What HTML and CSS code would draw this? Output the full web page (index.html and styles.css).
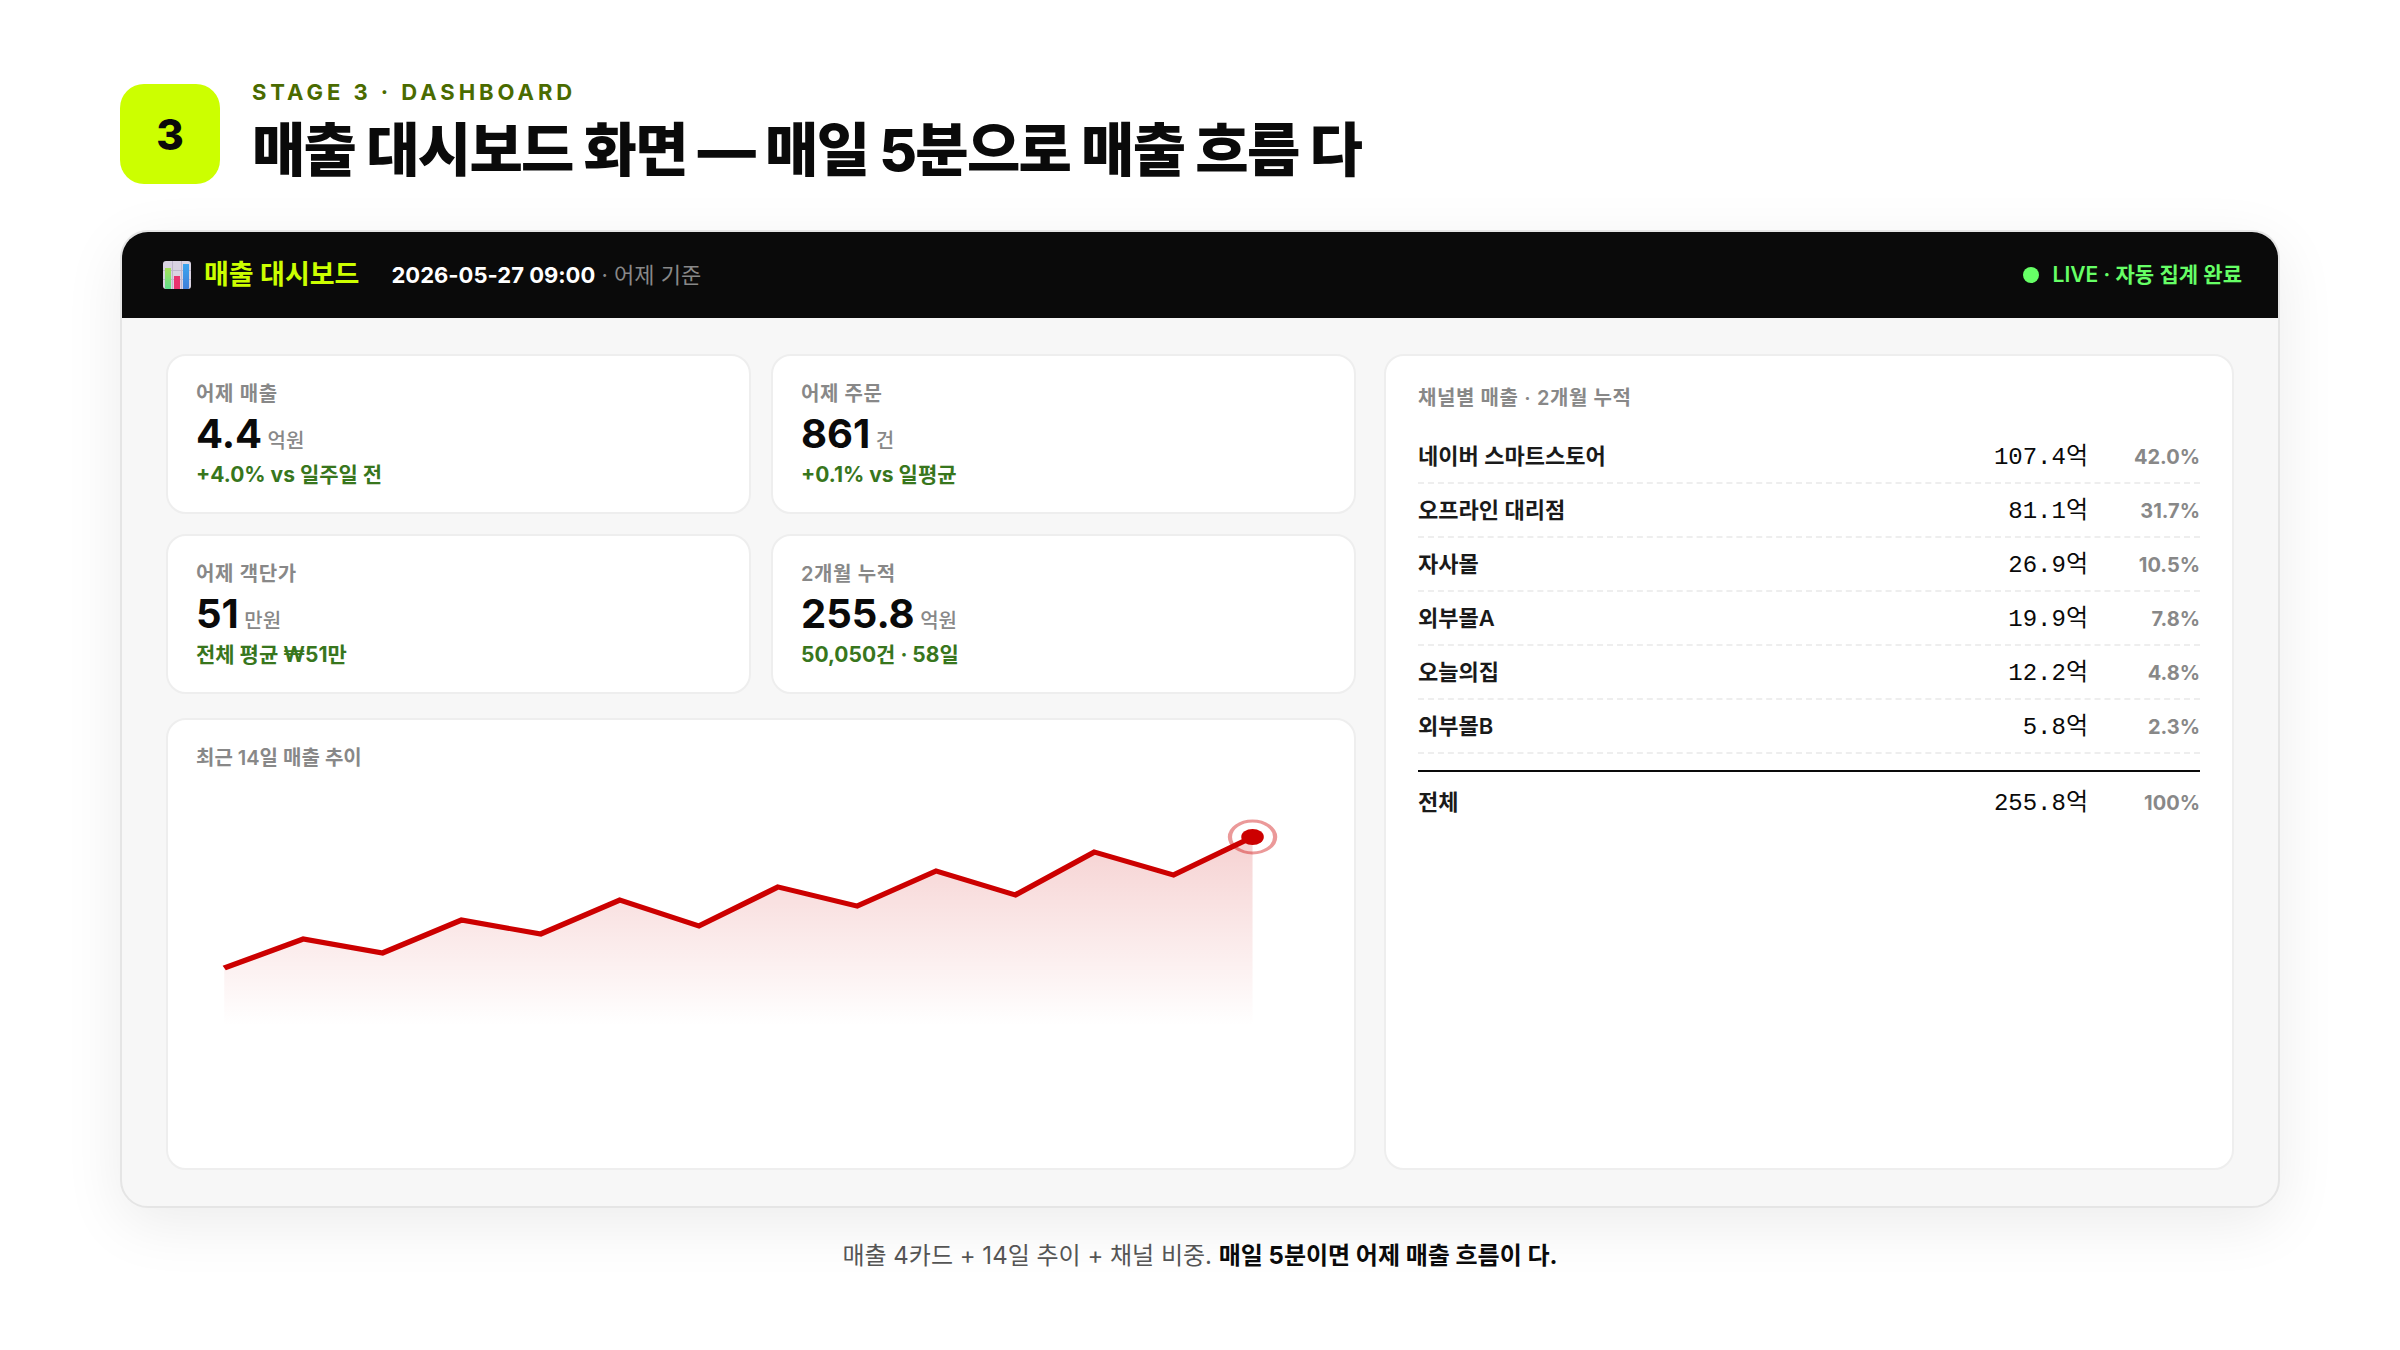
FILE: index.html
```html
<!DOCTYPE html>
<html lang="ko">
<head>
  <meta charset="UTF-8">
  <title>매출 대시보드</title>
  <link rel="stylesheet" href="styles.css">
</head>
<body>
<header class="head">
  <div class="badge">3</div>
  <div class="head-text">
    <div class="stage">STAGE 3 · DASHBOARD</div>
    <h1 class="title">매출 대시보드 화면 — 매일 5분으로 매출 흐름 다</h1>
  </div>
</header>

<main class="frame">
  <div class="topbar">
    <svg class="logo" viewBox="0 0 28 28" aria-hidden="true">
      <defs>
        <linearGradient id="green" x1="0" y1="0" x2="0" y2="1">
          <stop offset="0" stop-color="#a6e05a"/>
          <stop offset="1" stop-color="#5fe08c"/>
        </linearGradient>
        <linearGradient id="blue" x1="0" y1="0" x2="0" y2="1">
          <stop offset="0" stop-color="#3aa5f0"/>
          <stop offset="1" stop-color="#3f7fd8"/>
        </linearGradient>
      </defs>
      <rect width="28" height="28" rx="3" fill="#d9d3e2"/>
      <path d="M0 9.500h28M0 18.500h28M9.500 0v28M18.500 0v28" stroke="#bfb6cc" fill="none"/>
      <path d="M2 7h6v21H3q-1 0-1-1z" fill="url(#green)"/>
      <path d="M11 15h6v13h-6z" fill="#e8336f"/>
      <path d="M20 3h6v24q0 1-1 1h-5z" fill="url(#blue)"/>
    </svg>
    <strong class="brand">매출 대시보드</strong>
    <span class="date"><b>2026-05-27 09:00</b> · 어제 기준</span>
    <span class="live">LIVE · 자동 집계 완료</span>
  </div>

  <div class="body">
    <div class="left">
      <div class="kpis">
        <section class="card kpi">
          <div class="label">어제 매출</div>
          <div class="value">4.4 <small>억원</small></div>
          <div class="delta">+4.0% vs 일주일 전</div>
        </section>
        <section class="card kpi">
          <div class="label">어제 주문</div>
          <div class="value">861 <small>건</small></div>
          <div class="delta">+0.1% vs 일평균</div>
        </section>
        <section class="card kpi">
          <div class="label">어제 객단가</div>
          <div class="value">51 <small>만원</small></div>
          <div class="delta">전체 평균 ₩51만</div>
        </section>
        <section class="card kpi">
          <div class="label">2개월 누적</div>
          <div class="value">255.8 <small>억원</small></div>
          <div class="delta">50,050건 · 58일</div>
        </section>
      </div>
      <section class="card chart">
        <h2 class="label">최근 14일 매출 추이</h2>
        <svg class="trend" viewBox="0 0 800 260" preserveAspectRatio="none">
          <defs>
            <linearGradient id="fade" x1="0" y1="0" x2="0" y2="1">
              <stop offset="0" stop-color="#c00" stop-opacity=".18"/>
              <stop offset="1" stop-color="#c00" stop-opacity="0"/>
            </linearGradient>
          </defs>
          <path fill="url(#fade)" d="M20 192L76 163L132 177L188 144L244 158L300 124L356 150L412 111L468 130L524 95L580 119L636 76L692 99L748 61V250H20Z"/>
          <polyline fill="none" stroke="#c00" stroke-width="5" points="20,192 76,163 132,177 188,144 244,158 300,124 356,150 412,111 468,130 524,95 580,119 636,76 692,99 748,61"/>
          <circle cx="748" cy="61" r="8" fill="#c00"/>
          <circle cx="748" cy="61" r="16" fill="none" stroke="#c00" stroke-width="3" opacity=".4"/>
        </svg>
      </section>
    </div>

    <section class="card channels">
      <h2 class="label">채널별 매출 · 2개월 누적</h2>
      <table>
        <tbody>
          <tr><th scope="row">네이버 스마트스토어</th><td class="amount">107.4억</td><td class="share">42.0%</td></tr>
          <tr><th scope="row">오프라인 대리점</th><td class="amount">81.1억</td><td class="share">31.7%</td></tr>
          <tr><th scope="row">자사몰</th><td class="amount">26.9억</td><td class="share">10.5%</td></tr>
          <tr><th scope="row">외부몰A</th><td class="amount">19.9억</td><td class="share">7.8%</td></tr>
          <tr><th scope="row">오늘의집</th><td class="amount">12.2억</td><td class="share">4.8%</td></tr>
          <tr><th scope="row">외부몰B</th><td class="amount">5.8억</td><td class="share">2.3%</td></tr>
        </tbody>
        <tfoot>
          <tr><th scope="row">전체</th><td class="amount">255.8억</td><td class="share">100%</td></tr>
        </tfoot>
      </table>
    </section>
  </div>
</main>

<p class="caption">매출 4카드 + 14일 추이 + 채널 비중. <b>매일 5분이면 어제 매출 흐름이 다.</b></p>
</body>
</html>
```

FILE: styles.css
```css
* {
  box-sizing: border-box;
}

body {
  display: flex;
  flex-direction: column;
  min-height: 100vh;
  margin: 0;
  padding: 78px 120px 76px;
  background: #fff;
  color: #0a0a0a;
  font-family: Inter, "Noto Sans CJK KR", sans-serif;
}

.head {
  display: flex;
  align-items: center;
  gap: 32px;
  height: 112px;
  margin-bottom: 40px;
}

.badge {
  display: flex;
  align-items: center;
  justify-content: center;
  width: 100px;
  height: 100px;
  border-radius: 24px;
  background: #cf0;
  font-size: 42px;
  font-weight: 800;
}

.head-text {
  padding-top: 4px;
}

.stage {
  color: #4a6b00;
  font-size: 22px;
  line-height: 28px;
  font-weight: 700;
  letter-spacing: .18em;
}

.title {
  margin: 0;
  font-size: 58px;
  line-height: 88px;
  font-weight: 800;
  letter-spacing: -.03em;
}

.frame {
  display: flex;
  flex: 1;
  flex-direction: column;
  overflow: hidden;
  border: 2px solid #e5e5e5;
  border-radius: 28px;
  background: #f7f7f7;
  box-shadow: 0 16px 60px rgba(0, 0, 0, .08);
}

.topbar {
  display: flex;
  align-items: center;
  height: 86px;
  padding: 0 36px 0 41px;
  background: #0a0a0a;
}

.logo {
  width: 28px;
  height: 28px;
  margin-right: 13px;
}

.brand {
  margin-right: 32px;
  color: #cf0;
  font-size: 27px;
  line-height: 36px;
  font-weight: 700;
}

.date {
  color: #888;
  font-size: 22px;
  line-height: 32px;
}

.date b {
  color: #fff;
}

.live {
  display: flex;
  align-items: center;
  gap: 14px;
  margin-left: auto;
  color: #6f6;
  font-size: 21px;
  line-height: 30px;
  font-weight: 600;
}

.live::before {
  content: '';
  width: 16px;
  height: 16px;
  border-radius: 50%;
  background: #6f6;
}

.body {
  display: grid;
  flex: 1;
  grid-template-columns: 1.4fr 1fr;
  gap: 28px;
  padding: 36px 44px;
}

.left {
  display: flex;
  flex-direction: column;
  gap: 24px;
}

.kpis {
  display: grid;
  grid-template-columns: 1fr 1fr;
  gap: 20px;
}

.card {
  border: 2px solid #eee;
  border-radius: 20px;
  background: #fff;
}

.kpi {
  height: 160px;
  padding: 20px 28px;
}

.label {
  margin: 0;
  color: #888;
  font-size: 20px;
  line-height: 36px;
  font-weight: 600;
}

.kpi .label,
.channels .label {
  letter-spacing: .03em;
}

.value {
  font-size: 40px;
  line-height: 44px;
  font-weight: 700;
}

.value small {
  margin-left: -4px;
  color: #888;
  font-size: 20px;
  font-weight: 500;
}

.delta {
  color: #38761d;
  font-size: 21px;
  line-height: 24px;
  font-weight: 700;
}

.chart {
  flex: 1;
  padding: 20px 28px;
}

.trend {
  display: block;
  width: 100%;
  height: 260px;
}

.channels {
  padding: 24px 32px;
}

.channels .label {
  margin-bottom: 14px;
}

table,
tbody,
tfoot {
  display: block;
}

tr {
  display: flex;
  align-items: baseline;
  height: 54px;
  padding-top: 10px;
  border-bottom: 2px dashed #eee;
  line-height: 32px;
}

th,
td {
  padding: 0;
}

th {
  flex: 1;
  color: #1a1a1a;
  font-size: 22px;
  font-weight: 600;
  text-align: left;
}

.amount {
  font-family: "Liberation Mono", "Noto Sans CJK KR", monospace;
  font-size: 24px;
  text-align: right;
}

.share {
  width: 112px;
  color: #888;
  font-size: 20px;
  font-weight: 700;
  text-align: right;
}

tfoot {
  margin-top: 16px;
  border-top: 2px solid #0a0a0a;
}

tfoot tr {
  padding-top: 14px;
  border-bottom: 0;
}

.caption {
  margin: 30px 0 0;
  color: #555;
  font-size: 24px;
  line-height: 36px;
  text-align: center;
}

.caption b {
  color: #0a0a0a;
}
```
